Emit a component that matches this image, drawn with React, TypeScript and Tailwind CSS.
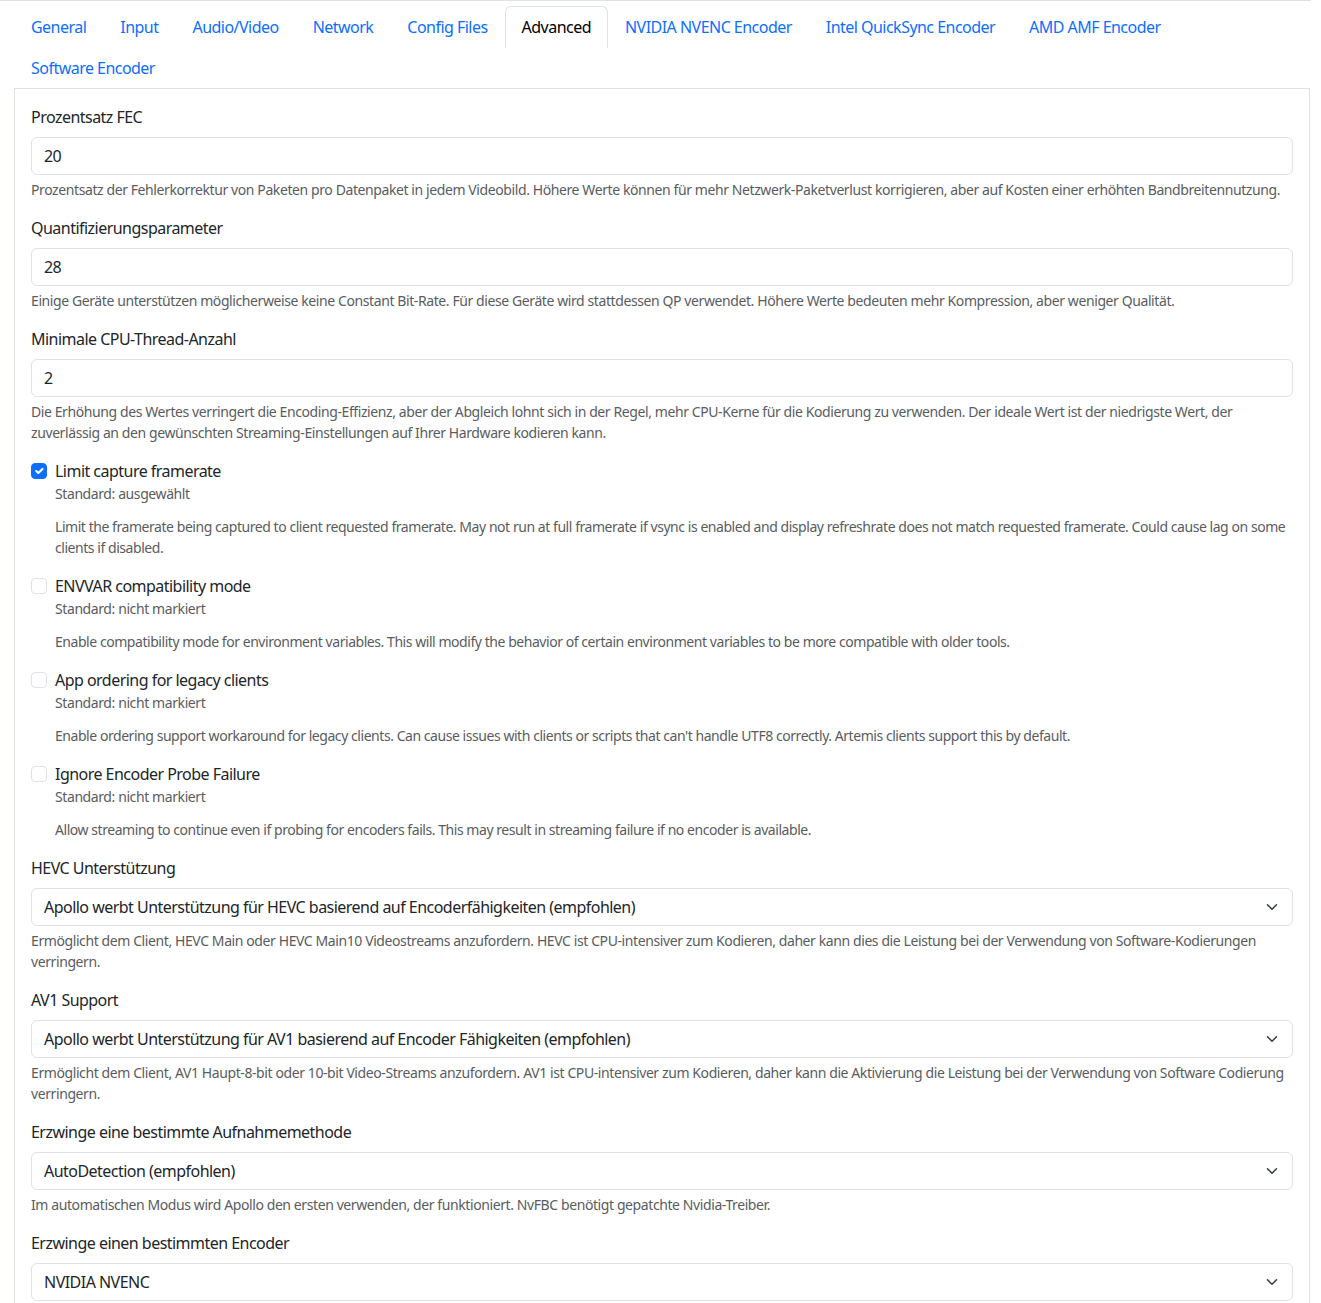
import { useState } from "react";

type Field =
  | { kind: "input"; label: string; value: string; help: string }
  | { kind: "check"; label: string; checked: boolean; help: string }
  | { kind: "select"; label: string; value: string; help: string };

const TABS = [
  "General",
  "Input",
  "Audio/Video",
  "Network",
  "Config Files",
  "Advanced",
  "NVIDIA NVENC Encoder",
  "Intel QuickSync Encoder",
  "AMD AMF Encoder",
  "Software Encoder",
];

const FIELDS: Field[] = [
  {
    kind: "input",
    label: "Prozentsatz FEC",
    value: "20",
    help: "Prozentsatz der Fehlerkorrektur von Paketen pro Datenpaket in jedem Videobild. Höhere Werte können für mehr Netzwerk-Paketverlust korrigieren, aber auf Kosten einer erhöhten Bandbreitennutzung.",
  },
  {
    kind: "input",
    label: "Quantifizierungsparameter",
    value: "28",
    help: "Einige Geräte unterstützen möglicherweise keine Constant Bit-Rate. Für diese Geräte wird stattdessen QP verwendet. Höhere Werte bedeuten mehr Kompression, aber weniger Qualität.",
  },
  {
    kind: "input",
    label: "Minimale CPU-Thread-Anzahl",
    value: "2",
    help: "Die Erhöhung des Wertes verringert die Encoding-Effizienz, aber der Abgleich lohnt sich in der Regel, mehr CPU-Kerne für die Kodierung zu verwenden. Der ideale Wert ist der niedrigste Wert, der zuverlässig an den gewünschten Streaming-Einstellungen auf Ihrer Hardware kodieren kann.",
  },
  {
    kind: "check",
    label: "Limit capture framerate",
    checked: true,
    help: "Limit the framerate being captured to client requested framerate. May not run at full framerate if vsync is enabled and display refreshrate does not match requested framerate. Could cause lag on some clients if disabled.",
  },
  {
    kind: "check",
    label: "ENVVAR compatibility mode",
    checked: false,
    help: "Enable compatibility mode for environment variables. This will modify the behavior of certain environment variables to be more compatible with older tools.",
  },
  {
    kind: "check",
    label: "App ordering for legacy clients",
    checked: false,
    help: "Enable ordering support workaround for legacy clients. Can cause issues with clients or scripts that can't handle UTF8 correctly. Artemis clients support this by default.",
  },
  {
    kind: "check",
    label: "Ignore Encoder Probe Failure",
    checked: false,
    help: "Allow streaming to continue even if probing for encoders fails. This may result in streaming failure if no encoder is available.",
  },
  {
    kind: "select",
    label: "HEVC Unterstützung",
    value: "Apollo werbt Unterstützung für HEVC basierend auf Encoderfähigkeiten (empfohlen)",
    help: "Ermöglicht dem Client, HEVC Main oder HEVC Main10 Videostreams anzufordern. HEVC ist CPU-intensiver zum Kodieren, daher kann dies die Leistung bei der Verwendung von Software-Kodierungen verringern.",
  },
  {
    kind: "select",
    label: "AV1 Support",
    value: "Apollo werbt Unterstützung für AV1 basierend auf Encoder Fähigkeiten (empfohlen)",
    help: "Ermöglicht dem Client, AV1 Haupt-8-bit oder 10-bit Video-Streams anzufordern. AV1 ist CPU-intensiver zum Kodieren, daher kann die Aktivierung die Leistung bei der Verwendung von Software Codierung verringern.",
  },
  {
    kind: "select",
    label: "Erzwinge eine bestimmte Aufnahmemethode",
    value: "AutoDetection (empfohlen)",
    help: "Im automatischen Modus wird Apollo den ersten verwenden, der funktioniert. NvFBC benötigt gepatchte Nvidia-Treiber.",
  },
  {
    kind: "select",
    label: "Erzwinge einen bestimmten Encoder",
    value: "NVIDIA NVENC",
    help: "Erzwingt einen bestimmten Encoder, ansonsten wählt Apollo die beste verfügbare Option aus. Hinweis: Wenn Sie einen Hardware-Encoder unter Windows angeben, muss er mit der GPU übereinstimmen, mit der das Display verbunden ist.",
  },
];

// small grey hint text under each control
const HINT = "text-sm leading-[21px] text-[#595c5f]";

function Chevron() {
  return (
    <svg width="16" height="12" viewBox="0 0 16 16" fill="none" stroke="#343a40" strokeWidth="2" strokeLinecap="round" strokeLinejoin="round">
      <path d="m2 5 6 6 6-6" />
    </svg>
  );
}

function CheckBox({ checked, onToggle }: { checked: boolean; onToggle: () => void }) {
  return (
    <button
      type="button"
      onClick={onToggle}
      className={`mt-1 -ml-6 flex h-4 w-4 shrink-0 items-center justify-center rounded-[4px] border ${
        checked ? "border-[#0d6efd] bg-[#0d6efd]" : "border-[#dee2e6] bg-white"
      }`}
    >
      {checked && (
        <svg width="16" height="16" viewBox="0 0 20 20" fill="none" stroke="#fff" strokeWidth="3" strokeLinecap="round" strokeLinejoin="round">
          <path d="m6 10 3 3 6-6" />
        </svg>
      )}
    </button>
  );
}

function FieldRow({ field }: { field: Field }) {
  const [checked, setChecked] = useState(field.kind === "check" ? field.checked : false);

  if (field.kind === "check") {
    return (
      <div className="mb-4 pl-6">
        <div className="flex gap-2">
          <CheckBox checked={checked} onToggle={() => setChecked(!checked)} />
          <label className="text-base leading-6">{field.label}</label>
        </div>
        <div className={`${HINT} tracking-[-0.029em]`}>
          Standard: {field.checked ? "ausgewählt" : "nicht markiert"}
        </div>
        <div className={`mt-3 ${HINT} tracking-[-0.032em]`}>{field.help}</div>
      </div>
    );
  }

  return (
    <div className="mb-4">
      <label className="mb-2 block text-base leading-6">{field.label}</label>
      {field.kind === "input" ? (
        <input
          type="text"
          defaultValue={field.value}
          className="block h-[38px] w-full rounded-md border border-[#dee2e6] bg-white px-3 text-base tracking-[-0.033em] text-[#212529] outline-none"
        />
      ) : (
        <div className="flex h-[38px] w-full items-center justify-between rounded-md border border-[#dee2e6] bg-white px-3 text-base">
          <span>{field.value}</span>
          <Chevron />
        </div>
      )}
      <div className={`mt-1 ${HINT} tracking-[-0.029em]`}>{field.help}</div>
    </div>
  );
}

export default function App() {
  const [active, setActive] = useState("Advanced");

  return (
    <div className="min-h-screen bg-white font-['Segoe_UI','Noto_Sans',sans-serif] tracking-[-0.033em] text-[#212529]">
      <div className="w-[1311px] border-t border-[#dee2e6] pt-[5px] pl-[14px] pr-px">
        {/* tab strip */}
        <ul className="flex flex-wrap">
          {TABS.map((tab) => (
            <li key={tab} className="-mb-px">
              <button
                type="button"
                onClick={() => setActive(tab)}
                className={`block rounded-t-md border px-4 py-2 text-base leading-6 ${
                  active === tab
                    ? "border-[#dee2e6] border-b-white bg-white text-black"
                    : "border-transparent text-[#0d6efd]"
                }`}
              >
                {tab}
              </button>
            </li>
          ))}
        </ul>

        {/* settings panel */}
        <div className="border border-[#dee2e6] p-4">
          {FIELDS.map((f) => (
            <FieldRow key={f.label} field={f} />
          ))}
        </div>
      </div>
    </div>
  );
}
